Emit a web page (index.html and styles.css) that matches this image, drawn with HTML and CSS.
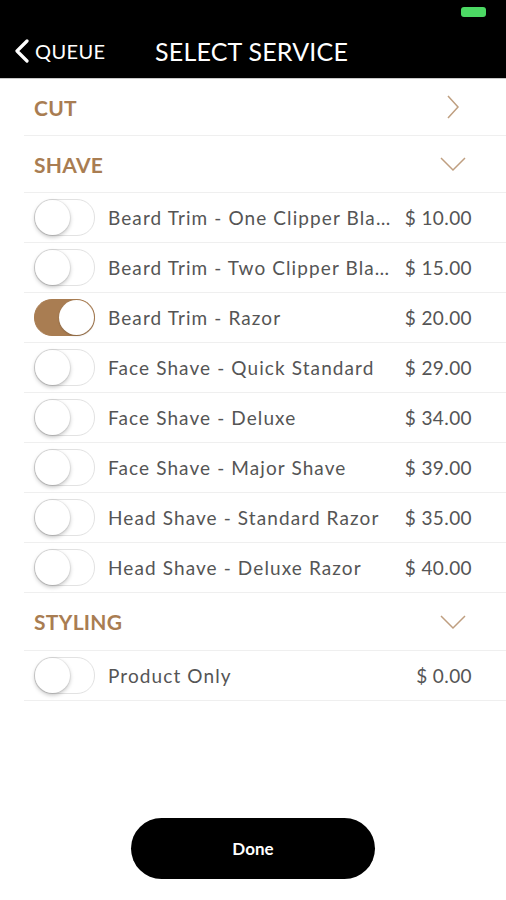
FILE: index.html
```html
<!DOCTYPE html>
<html>
<head>
<meta charset="utf-8">
<link rel="stylesheet" href="styles.css">
</head>
<body>
<div class="app">
  <header class="header">
    <div class="status"><span class="battery"></span></div>
    <div class="nav">
      <div class="back">
        <svg class="back-icon" width="16" height="24" viewBox="0 0 16 24"><path d="M13 2 L3 12 L13 22" fill="none" stroke="#fff" stroke-width="3.2" stroke-linecap="round" stroke-linejoin="round"/></svg>
        <span class="back-text">QUEUE</span>
      </div>
      <div class="title">SELECT SERVICE</div>
    </div>
  </header>

  <div class="list">
    <div class="section">
      <span class="section-title">CUT</span>
      <svg class="chev" width="24" height="24" viewBox="0 0 24 24"><path d="M6 1 L16 12 L6 23" fill="none" stroke="#bf9f80" stroke-width="1.5"/></svg>
    </div>
    <div class="section">
      <span class="section-title">SHAVE</span>
      <svg class="chev" width="26" height="16" viewBox="0 0 26 16"><path d="M1 2 L13 14 L25 2" fill="none" stroke="#bf9f80" stroke-width="1.5"/></svg>
    </div>
    <div class="item"><span class="toggle"></span><span class="name">Beard Trim - One Clipper Blade</span><span class="price">$ 10.00</span></div>
    <div class="item"><span class="toggle"></span><span class="name">Beard Trim - Two Clipper Blades</span><span class="price">$ 15.00</span></div>
    <div class="item"><span class="toggle on"></span><span class="name">Beard Trim - Razor</span><span class="price">$ 20.00</span></div>
    <div class="item"><span class="toggle"></span><span class="name">Face Shave - Quick Standard</span><span class="price">$ 29.00</span></div>
    <div class="item"><span class="toggle"></span><span class="name">Face Shave - Deluxe</span><span class="price">$ 34.00</span></div>
    <div class="item"><span class="toggle"></span><span class="name">Face Shave - Major Shave</span><span class="price">$ 39.00</span></div>
    <div class="item"><span class="toggle"></span><span class="name">Head Shave - Standard Razor</span><span class="price">$ 35.00</span></div>
    <div class="item"><span class="toggle"></span><span class="name">Head Shave - Deluxe Razor</span><span class="price">$ 40.00</span></div>
    <div class="section styling">
      <span class="section-title">STYLING</span>
      <svg class="chev" width="26" height="16" viewBox="0 0 26 16"><path d="M1 2 L13 14 L25 2" fill="none" stroke="#bf9f80" stroke-width="1.5"/></svg>
    </div>
    <div class="item"><span class="toggle"></span><span class="name">Product Only</span><span class="price">$ 0.00</span></div>
  </div>

  <div class="footer">
    <button class="done">Done</button>
  </div>
</div>
</body>
</html>
```
FILE: styles.css
```css
html, body {
  margin: 0;
  padding: 0;
  background: #fff;
}
.app {
  width: 506px;
  height: 900px;
  display: flex;
  flex-direction: column;
  font-family: Lato, "Noto Sans", sans-serif;
  overflow: hidden;
}
.header {
  background: #000;
  height: 78px;
  border-bottom: 1px solid #c8c8c8;
  display: flex;
  flex-direction: column;
}
.status {
  height: 30px;
  display: flex;
  justify-content: flex-end;
  align-items: flex-start;
  padding: 7px 20px 0 0;
  box-sizing: border-box;
}
.battery {
  width: 25px;
  height: 10px;
  background: #4cd964;
  border-radius: 3px;
}
.nav {
  display: flex;
  align-items: center;
  padding: 0 0 0 14px;
  height: 42px;
}
.back {
  display: flex;
  align-items: center;
  gap: 5px;
  width: 141px;
}
.back-text {
  color: #fff;
  font-size: 20px;
  letter-spacing: 0.4px;
}
.title {
  color: #fff;
  font-size: 25px;
  letter-spacing: 0.2px;
}
.list {
  display: flex;
  flex-direction: column;
}
.section {
  height: 56px;
  margin-left: 24px;
  padding: 0 40px 0 10px;
  border-bottom: 1px solid #efefef;
  display: flex;
  align-items: center;
  justify-content: space-between;
}
.section.styling {
  height: 57px;
}
.section-title {
  color: #a97d52;
  font-size: 21px;
  font-weight: 700;
  letter-spacing: 0.3px;
}
.chev {
  display: block;
}
.item {
  height: 49px;
  margin-left: 24px;
  padding: 0 34px 0 10px;
  border-bottom: 1px solid #efefef;
  display: flex;
  align-items: center;
  gap: 13px;
}
.toggle {
  flex: none;
  width: 59px;
  height: 35px;
  border-radius: 18px;
  border: 1px solid #e2e2e2;
  background: #fff;
  position: relative;
}
.toggle::after {
  content: "";
  position: absolute;
  left: 0;
  top: 0;
  width: 35px;
  height: 35px;
  border-radius: 50%;
  background: #fff;
  box-shadow: 0 2px 4px rgba(0,0,0,0.25), 0 0 0 1px rgba(0,0,0,0.05);
}
.toggle.on {
  background: #a97d52;
  border-color: #a97d52;
}
.toggle.on::after {
  left: 24px;
  box-shadow: 0 1px 2px rgba(0,0,0,0.2);
}
.name {
  flex: 1;
  min-width: 0;
  white-space: nowrap;
  overflow: hidden;
  text-overflow: ellipsis;
  color: #555;
  font-size: 19px;
  letter-spacing: 1.1px;
}
.price {
  flex: none;
  color: #555;
  font-size: 19px;
  letter-spacing: 0.4px;
}
.footer {
  margin-top: auto;
  display: flex;
  justify-content: center;
  padding-bottom: 21px;
}
.done {
  width: 244px;
  height: 61px;
  border: none;
  border-radius: 31px;
  background: #000;
  color: #fff;
  font-family: Lato, "Noto Sans", sans-serif;
  font-weight: 700;
  font-size: 17px;
}
```
